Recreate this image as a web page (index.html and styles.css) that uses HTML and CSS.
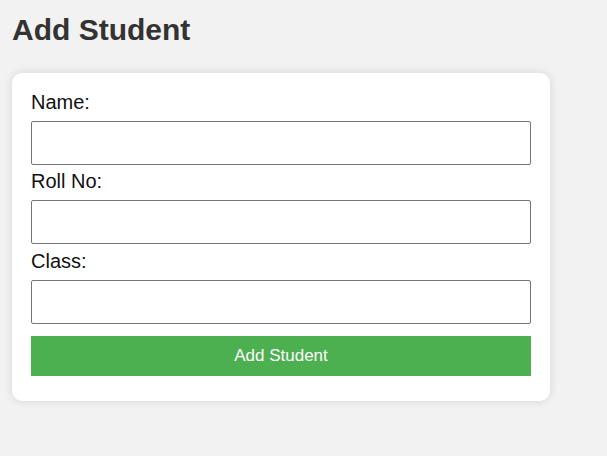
FILE: index.html
```html
<!DOCTYPE html>
<html>
<head>
<meta charset="utf-8">
<title>Add Student</title>
<link rel="stylesheet" href="styles.css">
</head>
<body>
<h1 class="title">Add Student</h1>
<form class="card">
  <label class="field-label" for="name">Name:</label>
  <input class="field-input" id="name" type="text">
  <label class="field-label" for="roll">Roll No:</label>
  <input class="field-input" id="roll" type="text">
  <label class="field-label" for="cls">Class:</label>
  <input class="field-input" id="cls" type="text">
  <button class="submit" type="button">Add Student</button>
</form>
</body>
</html>
```
FILE: styles.css
```css
html, body {
  margin: 0;
  background: #f2f2f2;
}
body {
  padding: 13px 12px;
  font-family: "Liberation Sans", Arial, sans-serif;
}
.title {
  margin: 0 0 26px;
  font-size: 30px;
  font-weight: bold;
  color: #333;
  line-height: 34px;
}
.card {
  display: flex;
  flex-direction: column;
  width: 500px;
  padding: 18px 19px;
  background: #fff;
  border-radius: 10px;
  box-shadow: 0 0 10px rgba(0, 0, 0, 0.12);
}
.field-label {
  display: block;
  font-size: 20px;
  line-height: 23px;
  color: #111;
}
.field-input {
  box-sizing: border-box;
  width: 500px;
  height: 44px;
  margin: 7px 0 5.4px;
  padding: 0 10px;
  border: 1px solid #767676;
  border-radius: 2px;
  font-size: 16px;
  background: #fff;
}
.submit {
  box-sizing: border-box;
  width: 500px;
  height: 40px;
  margin: 7px 0;
  border: none;
  background: #4caf50;
  color: #fff;
  font-family: "Liberation Sans", Arial, sans-serif;
  font-size: 17px;
}
```
